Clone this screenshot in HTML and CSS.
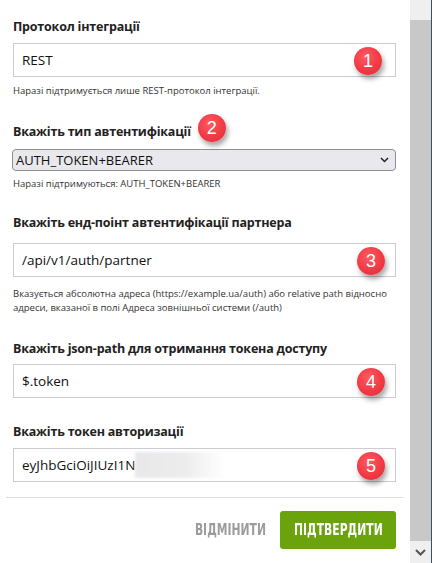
FILE: index.html
```html
<!DOCTYPE html>
<html lang="uk">
<head>
<meta charset="utf-8">
<title>Інтеграція</title>
<link rel="stylesheet" href="styles.css">
</head>
<body>
<div class="page">
  <main class="form">
    <div class="label">Протокол інтеграції</div>
    <div class="input m8">REST<span class="badge badge-1">1</span></div>
    <div class="help m7">Наразі підтримується лише REST-протокол інтеграції.</div>

    <div class="label m26">Вкажіть тип автентифікації<span class="anchor"><span class="badge badge-2">2</span></span></div>
    <div class="select m9">
      <span>AUTH_TOKEN+BEARER</span>
      <svg class="chev" width="9" height="6" viewBox="0 0 9 6"><path d="M1 1 L4.5 4.5 L8 1" fill="none" stroke="#222" stroke-width="1.5"/></svg>
    </div>
    <div class="help m6">Наразі підтримуються: AUTH_TOKEN+BEARER</div>

    <div class="label m24">Вкажіть енд-поінт автентифікації партнера</div>
    <div class="input m12">/api/v1/auth/partner<span class="badge badge-n">3</span></div>
    <div class="help m10">Вказується абсолютна адреса (https://example.ua/auth) або relative path відносно адреси, вказаної в полі Адреса зовнішньої системи (/auth)</div>

    <div class="label m26">Вкажіть json-path для отримання токена доступу</div>
    <div class="input m7">$.token<span class="badge badge-n">4</span></div>

    <div class="label m26">Вкажіть токен авторизації</div>
    <div class="input m8">eyJhbGciOiJIUzI1N<span class="blur"></span><span class="badge badge-n">5</span></div>

    <div class="divider"></div>
    <div class="actions">
      <button class="btn btn-cancel"><span class="cond">ВІДМІНИТИ</span></button>
      <button class="btn btn-ok"><span class="cond">ПІДТВЕРДИТИ</span></button>
    </div>
  </main>
  <div class="scrollbar">
    <div class="sb-top"></div>
    <div class="sb-thumb"></div>
    <div class="sb-bottom">
      <svg width="11" height="7" viewBox="0 0 11 7"><path d="M1 1 L5.5 5.5 L10 1" fill="none" stroke="#555" stroke-width="2"/></svg>
    </div>
  </div>
</div>
</body>
</html>
```

FILE: styles.css
```css
* { box-sizing: border-box; }
html, body { margin: 0; padding: 0; }
body {
  background: #fff;
  font-family: "Open Sans", "Noto Sans", sans-serif;
  color: #222;
}
.page {
  display: flex;
  width: 432px;
  height: 563px;
  overflow: hidden;
}
.form {
  width: 410px;
  padding: 19px 14px 0 13px;
  display: flex;
  flex-direction: column;
}
.label {
  font-size: 12.5px;
  line-height: 16px;
  font-weight: 700;
  letter-spacing: -0.2px;
  color: #222;
  height: 16px;
  white-space: nowrap;
}
.input {
  position: relative;
  height: 34px;
  border: 1px solid #cbcbd4;
  padding: 0 8px;
  display: flex;
  align-items: center;
  font-size: 13.5px;
  color: #111;
}
.select {
  height: 22px;
  border: 1px solid #8f8f9d;
  border-radius: 4px;
  background: #e9e9ed;
  display: flex;
  align-items: center;
  justify-content: space-between;
  padding: 0 6px 0 3px;
  font-size: 13px;
  color: #111;
  margin-left: -1px;
}
.help {
  font-size: 9.5px;
  line-height: 14px;
  color: #333;
}
.m6 { margin-top: 6px; }
.m7 { margin-top: 7px; }
.m8 { margin-top: 8px; }
.m9 { margin-top: 9px; }
.m10 { margin-top: 10px; }
.m12 { margin-top: 12px; }
.m24 { margin-top: 24px; }
.m26 { margin-top: 26px; }

.anchor { position: relative; display: inline-block; width: 0; height: 16px; vertical-align: top; }
.badge {
  position: absolute;
  width: 28px;
  height: 28px;
  border-radius: 50%;
  background: radial-gradient(circle at 42% 35%, #ff5a62 0%, #f03a44 55%, #e02a35 100%);
  box-shadow: 2px 4px 5px rgba(0, 0, 0, 0.35);
  color: #fff;
  font-family: "Liberation Sans", Arial, sans-serif;
  font-size: 18px;
  line-height: 28px;
  text-align: center;
  letter-spacing: 0;
  font-weight: 400;
}
.badge-1 { right: 13px; top: 3px; }
.badge-n { right: 10px; top: 3px; }
.badge-2 { left: 7px; top: -10px; }

.blur {
  display: inline-block;
  width: 90px;
  height: 26px;
  background: linear-gradient(to right, #e8e8e8 0%, #ececec 55%, rgba(244,244,244,0) 100%);
  filter: blur(1.5px);
}
.divider {
  margin: 15px -7px 0 -7px;
  height: 1px;
  background: #dcdcdc;
}
.actions {
  margin-top: 13px;
  display: flex;
  justify-content: flex-end;
  align-items: center;
  gap: 14px;
}
.btn {
  border: none;
  background: none;
  padding: 0;
  font-family: "DejaVu Sans", sans-serif;
  font-stretch: condensed;
  font-weight: 700;
  font-size: 15px;
  cursor: pointer;
}
.cond {
  display: inline-block;
  transform: scaleX(0.8);
}
.btn-cancel {
  color: #9c9c9c;
  width: 71px;
  height: 38px;
  display: flex;
  align-items: center;
  justify-content: center;
  white-space: nowrap;
}
.btn-ok {
  width: 116px;
  height: 38px;
  background: #6aa30b;
  color: #fff;
  border-radius: 3px;
  display: flex;
  align-items: center;
  justify-content: center;
  white-space: nowrap;
}
.scrollbar {
  width: 22px;
  height: 563px;
  display: flex;
  flex-direction: column;
  border-right: 1px solid #3e4f60;
}
.sb-top { height: 20px; background: #efefef; }
.sb-thumb { flex: 1; background: #c8c8c8; }
.sb-bottom {
  height: 22px;
  background: #efefef;
  display: flex;
  align-items: center;
  justify-content: center;
}
```
